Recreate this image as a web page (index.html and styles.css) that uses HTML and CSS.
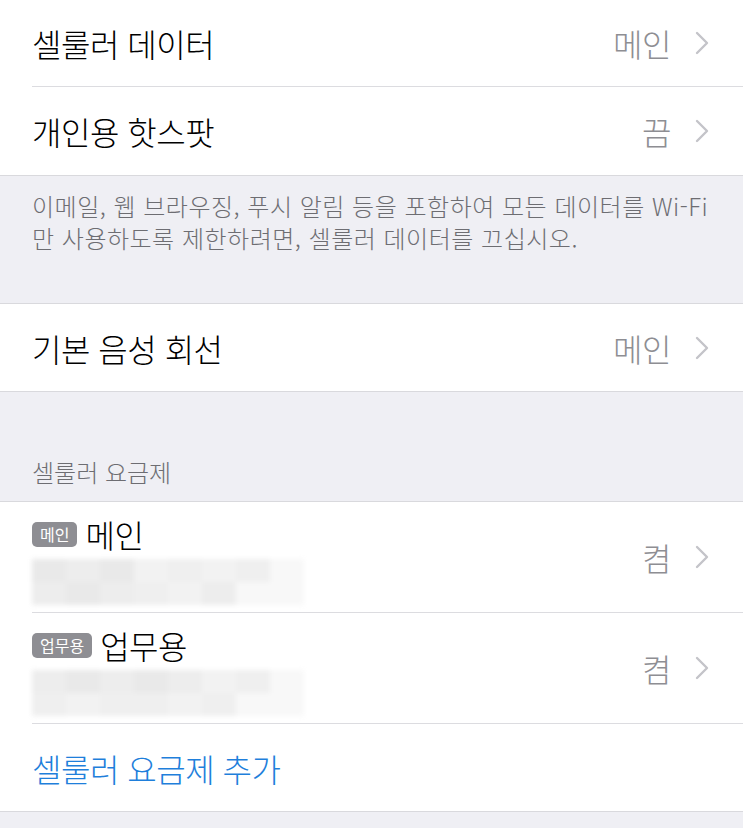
FILE: index.html
```html
<!DOCTYPE html>
<html lang="ko">
<head>
<meta charset="utf-8">
<link rel="stylesheet" href="styles.css">
</head>
<body>
<div class="page">
  <section class="group group-first">
    <div class="cell">
      <div class="cell-inner">
        <span class="label">셀룰러 데이터</span>
        <span class="value">메인</span>
        <svg class="chev" viewBox="0 0 14 24"><path d="M2 2 L12 12 L2 22"/></svg>
      </div>
    </div>
    <div class="cell">
      <div class="cell-inner last">
        <span class="label">개인용 핫스팟</span>
        <span class="value">끔</span>
        <svg class="chev" viewBox="0 0 14 24"><path d="M2 2 L12 12 L2 22"/></svg>
      </div>
    </div>
  </section>

  <p class="footer">이메일, 웹 브라우징, 푸시 알림 등을 포함하여 모든 데이터를 Wi-Fi 만 사용하도록 제한하려면, 셀룰러 데이터를 끄십시오.</p>

  <section class="group">
    <div class="cell">
      <div class="cell-inner last">
        <span class="label">기본 음성 회선</span>
        <span class="value">메인</span>
        <svg class="chev" viewBox="0 0 14 24"><path d="M2 2 L12 12 L2 22"/></svg>
      </div>
    </div>
  </section>

  <h2 class="header">셀룰러 요금제</h2>

  <section class="group">
    <div class="cell">
      <div class="cell-inner plan">
        <div class="plan-text">
          <div class="plan-title"><span class="badge">메인</span><span class="plan-name">메인</span></div>
          <div class="blur">
            <div class="blur-row"><i class="b1"></i><i class="b2"></i><i class="b1"></i><i class="b3"></i><i class="b4"></i><i class="b3"></i><i class="b4"></i><i class="b5"></i></div>
            <div class="blur-row"><i class="b2"></i><i class="b1"></i><i class="b2"></i><i class="b4"></i><i class="b3"></i><i class="b2"></i><i class="b5"></i><i class="b5"></i></div>
          </div>
        </div>
        <span class="value">켬</span>
        <svg class="chev" viewBox="0 0 14 24"><path d="M2 2 L12 12 L2 22"/></svg>
      </div>
    </div>
    <div class="cell">
      <div class="cell-inner plan">
        <div class="plan-text">
          <div class="plan-title"><span class="badge">업무용</span><span class="plan-name">업무용</span></div>
          <div class="blur">
            <div class="blur-row"><i class="b2"></i><i class="b1"></i><i class="b2"></i><i class="b1"></i><i class="b2"></i><i class="b3"></i><i class="b4"></i><i class="b5"></i></div>
            <div class="blur-row"><i class="b4"></i><i class="b3"></i><i class="b4"></i><i class="b4"></i><i class="b3"></i><i class="b4"></i><i class="b5"></i><i class="b5"></i></div>
          </div>
        </div>
        <span class="value">켬</span>
        <svg class="chev" viewBox="0 0 14 24"><path d="M2 2 L12 12 L2 22"/></svg>
      </div>
    </div>
    <div class="cell">
      <div class="cell-inner last add">
        <span class="link">셀룰러 요금제 추가</span>
      </div>
    </div>
  </section>
</div>
</body>
</html>
```

FILE: styles.css
```css
* { box-sizing: border-box; margin: 0; padding: 0; }
html, body { background: #efeff4; }
body {
  font-family: "Noto Sans CJK KR", "Noto Sans", sans-serif;
  font-weight: 300;
  -webkit-font-smoothing: antialiased;
}
.page { width: 743px; height: 828px; overflow: hidden; background: #efeff4; }

.group {
  background: #fff;
  border-top: 1px solid #d9d9dd;
  border-bottom: 1px solid #d9d9dd;
}
.group-first { border-top: none; }

.cell { padding-left: 32px; }
.cell-inner {
  display: flex;
  align-items: center;
  height: 87px;
  padding-right: 34px;
  border-bottom: 1px solid #dcdce0;
}
.cell-inner.last { border-bottom: none; height: 87px; }
.group-first .cell-inner.last { height: 88px; }

.label {
  flex: 1;
  font-size: 32px;
  color: #000;
  letter-spacing: -0.5px;
  line-height: 1;
}
.value {
  font-size: 32px;
  color: #8e8e93;
  letter-spacing: -0.5px;
  margin-right: 24px;
  line-height: 1;
}
.chev {
  width: 14px;
  height: 24px;
  fill: none;
  stroke: #c4c4c9;
  stroke-width: 2.4;
  stroke-linecap: round;
  stroke-linejoin: round;
}

.footer {
  font-size: 24px;
  line-height: 32px;
  color: #6d6d72;
  padding: 14px 24px 48px 32px;
  letter-spacing: 0.5px;
  height: 127px;
}

.header {
  font-size: 24px;
  font-weight: 300;
  color: #6d6d72;
  line-height: 32px;
  height: 109px;
  padding: 64px 0 0 32px;
}

.cell-inner.plan { height: 111px; }
.plan-text { flex: 1; display: flex; flex-direction: column; padding-top: 6px; }
.plan-title { display: flex; align-items: center; height: 38px; }
.badge {
  background: #8e8e93;
  color: #fff;
  font-size: 16px;
  font-weight: 400;
  line-height: 25px;
  padding: 0 8px;
  border-radius: 5px;
  margin-right: 8px;
}
.plan-name { font-size: 32px; color: #000; letter-spacing: -0.5px; line-height: 1; }

.blur {
  width: 272px;
  height: 46px;
  margin-top: 6px;
  filter: blur(2.5px);
  display: flex;
  flex-direction: column;
}
.blur-row { display: flex; flex: 1; }
.blur-row i { flex: 1; display: block; }
.b1 { background: #e9e9e9; }
.b2 { background: #ededed; }
.b3 { background: #f2f2f2; }
.b4 { background: #efefef; }
.b5 { background: #f8f8f8; }

.cell-inner.add { height: 87px; }
.link {
  font-size: 32px;
  color: #1f7fdb;
  letter-spacing: -0.5px;
  line-height: 1;
}
```
